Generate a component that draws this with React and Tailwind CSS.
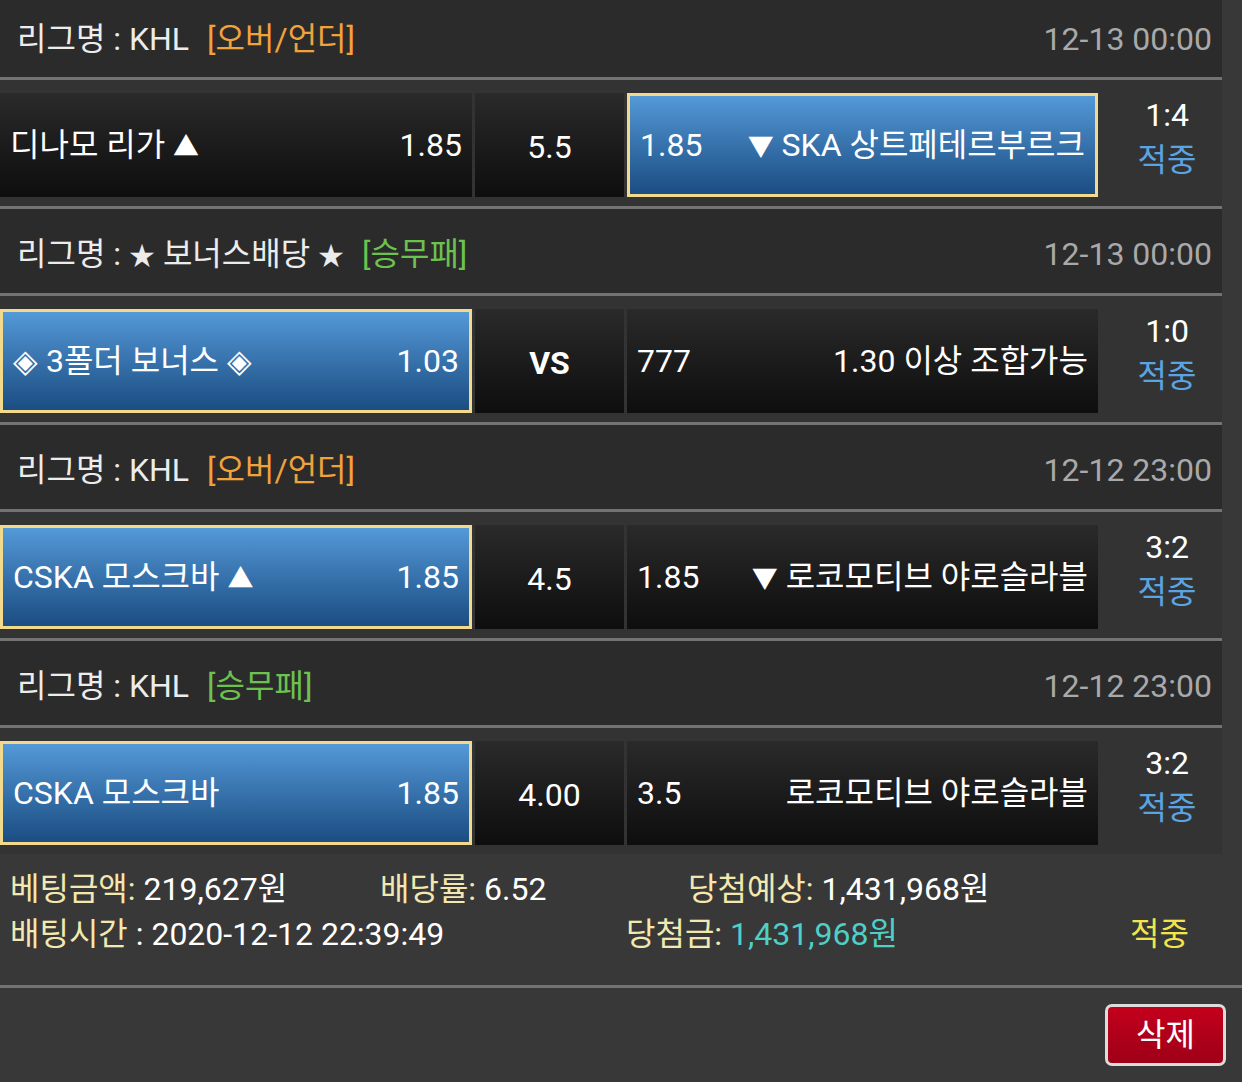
import React from 'react';

const FONT = { fontFamily: 'Roboto, "Noto Sans CJK KR", sans-serif' };

const games = [
  {
    league: '리그명 : KHL',
    tag: '[오버/언더]',
    tagColor: 'text-[#f0a23c]',
    time: '12-13 00:00',
    first: true,
    home: { name: '디나모 리가 ▲', odds: '1.85', picked: false },
    mid: { text: '5.5', bold: false },
    away: { odds: '1.85', name: '▼ SKA 상트페테르부르크', picked: true },
    score: '1:4',
  },
  {
    league: '리그명 : ★ 보너스배당 ★',
    tag: '[승무패]',
    tagColor: 'text-[#6cc24f]',
    time: '12-13 00:00',
    home: { name: '◈ 3폴더 보너스 ◈', odds: '1.03', picked: true },
    mid: { text: 'VS', bold: true },
    away: { odds: '777', name: '1.30 이상 조합가능', picked: false },
    score: '1:0',
  },
  {
    league: '리그명 : KHL',
    tag: '[오버/언더]',
    tagColor: 'text-[#f0a23c]',
    time: '12-12 23:00',
    home: { name: 'CSKA 모스크바 ▲', odds: '1.85', picked: true },
    mid: { text: '4.5', bold: false },
    away: { odds: '1.85', name: '▼ 로코모티브 야로슬라블', picked: false },
    score: '3:2',
  },
  {
    league: '리그명 : KHL',
    tag: '[승무패]',
    tagColor: 'text-[#6cc24f]',
    time: '12-12 23:00',
    home: { name: 'CSKA 모스크바', odds: '1.85', picked: true },
    mid: { text: '4.00', bold: false },
    away: { odds: '3.5', name: '로코모티브 야로슬라블', picked: false },
    score: '3:2',
    last: true,
  },
];

// triangles and stars render too big in the CJK font, shrink them a bit
function withSymbols(text) {
  return text.split(/([▲▼★])/).map((part, i) =>
    part === '▲' || part === '▼' || part === '★' ? (
      <span key={i} className="text-[26px]">
        {part}
      </span>
    ) : (
      <React.Fragment key={i}>{part}</React.Fragment>
    )
  );
}

function Cell({ picked, children, className = '' }) {
  const look = picked
    ? 'border-[3px] border-[#f2d98c] bg-gradient-to-b from-[#5499d8] to-[#1b4d82] px-[10px]'
    : 'bg-gradient-to-b from-[#2a2a2a] to-[#0e0e0e] px-[10px]';
  return (
    <div className={`h-[104px] flex items-center text-white ${look} ${className}`}>{children}</div>
  );
}

function Line() {
  return <div className="h-[3px] bg-[#737373]" />;
}

function Game({ g }) {
  return (
    <div>
      <div
        className={`${g.first ? 'h-[77px]' : 'h-[84px] pt-[6px]'} bg-[#2b2b2b] flex items-center justify-between pl-[17px] pr-[10px]`}
      >
        <div className="text-[#ececec]">
          {withSymbols(g.league)}
          <span className={`ml-[18px] ${g.tagColor}`}>{g.tag}</span>
        </div>
        <div className="text-[#a9a9a9]">{g.time}</div>
      </div>
      <Line />
      <div className="bg-[#333333] pt-[13px] pb-[9px] flex gap-[3px]">
        <Cell picked={g.home.picked} className="w-[472px] justify-between">
          <span>{withSymbols(g.home.name)}</span>
          <span>{g.home.odds}</span>
        </Cell>
        <Cell picked={false} className={`w-[149px] justify-center ${g.mid.bold ? 'font-bold' : ''}`}>
          <span className="mt-[4px]">{g.mid.text}</span>
        </Cell>
        <Cell picked={g.away.picked} className="w-[471px] justify-between">
          <span>{g.away.odds}</span>
          <span>{withSymbols(g.away.name)}</span>
        </Cell>
        <div className="flex-1 flex flex-col items-center justify-center leading-[45px] -mt-[14px] pl-[11px]">
          <span className="text-white">{g.score}</span>
          <span className="text-[#5ba4e2]">적중</span>
        </div>
      </div>
      {!g.last && <Line />}
    </div>
  );
}

export default function App() {
  return (
    <div className="min-h-[1082px] w-[1242px] bg-[#383838] text-[32px] leading-none" style={FONT}>
      <div className="w-[1222px]">
        {games.map((g, i) => (
          <Game key={i} g={g} />
        ))}
      </div>
      <div className="h-[131px] pt-[13px] pl-[10px] leading-[45px]">
        <div className="flex">
          <div className="w-[370px]">
            <span className="text-[#f2e8b0]">베팅금액: </span>
            <span className="text-white">219,627원</span>
          </div>
          <div className="w-[308px]">
            <span className="text-[#f2e8b0]">배당률: </span>
            <span className="text-white">6.52</span>
          </div>
          <div>
            <span className="text-[#f2e8b0]">당첨예상: </span>
            <span className="text-white">1,431,968원</span>
          </div>
        </div>
        <div className="flex">
          <div className="w-[616px]">
            <span className="text-[#f2e8b0]">배팅시간 </span>
            <span className="text-white">: 2020-12-12 22:39:49</span>
          </div>
          <div className="w-[504px]">
            <span className="text-[#f2e8b0]">당첨금: </span>
            <span className="text-[#4fcfc6]">1,431,968원</span>
          </div>
          <div className="text-[#f2e54c]">적중</div>
        </div>
      </div>
      <div className="h-[3px] bg-[#737373]" />
      <div className="flex justify-end pt-[16px] pr-[16px]">
        <button
          type="button"
          className="w-[121px] h-[62px] rounded-[7px] border-[3px] border-[#dcdcdc] bg-gradient-to-b from-[#c4001c] to-[#9e0018] text-white text-[32px] flex items-center justify-center"
        >
          삭제
        </button>
      </div>
    </div>
  );
}
